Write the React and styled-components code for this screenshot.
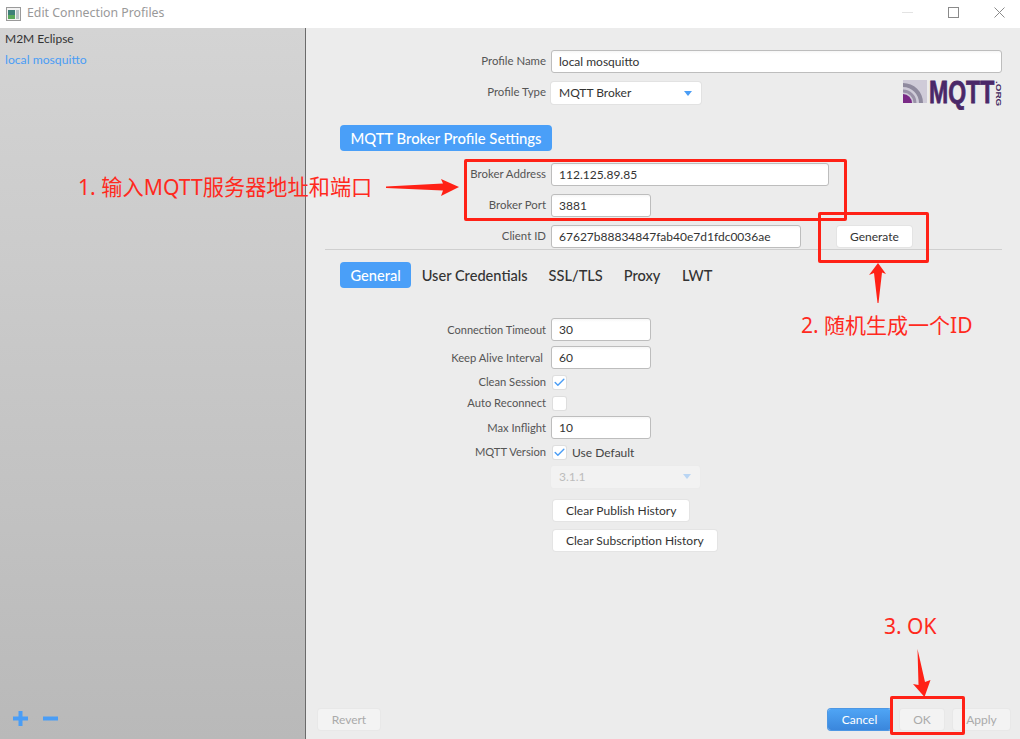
import React from "react";
import styled, { createGlobalStyle } from "styled-components";
import { Check } from "lucide-react";

const Global = createGlobalStyle`
  html, body { margin: 0; padding: 0; width: 1020px; height: 739px; overflow: hidden; background: #ececec; }
  * { box-sizing: border-box; }
  body { font-family: Lato, "Noto Sans", sans-serif; font-size: 12px; color: #333; }
`;

const Win = styled.div`
  position: relative; width: 1020px; height: 739px; display: flex; flex-direction: column; overflow: hidden;
`;
const TitleBar = styled.div`
  height: 28px; flex: none; background: #fff; display: flex; align-items: center; padding-left: 6px; gap: 6px;
  color: #999; font: 12.3px "Noto Sans", "Noto Sans CJK SC", sans-serif;
`;
const TitleText = styled.span` flex: 1; padding-bottom: 4px; `;
const WinBtns = styled.div` display: flex; width: 135px; height: 100%; flex: none; `;
const WinBtn = styled.div`
  width: 45px; display: flex; align-items: center; justify-content: center;
  padding: 0 0 4px ${p => p.$pl || 0}px;
`;
const Body = styled.div` flex: 1; display: flex; min-height: 0; `;
const Side = styled.aside`
  width: 306px; flex: none; border-right: 1px solid #6b6b6b;
  background: linear-gradient(#d4d4d4, #b9b9b9);
  display: flex; flex-direction: column; padding: 3px 5px 0;
`;
const ProfileItem = styled.div`
  height: 20px; line-height: 15px; color: ${p => p.$active ? "#4a9df5" : "#333"};
  font-size: ${p => p.$active ? 12.2 : 12}px; margin-top: ${p => p.$active ? 1 : 0}px;
`;
const SideTools = styled.div`
  margin-top: auto; height: 28px; display: flex; gap: 15px; padding-left: 8px; align-items: flex-start;
`;
const Main = styled.main`
  flex: 1; display: flex; flex-direction: column; padding: 22px 10px 9px 0; min-width: 0;
`;
const Row = styled.div`
  display: flex; align-items: center; height: ${p => p.$h || 23}px; margin-top: ${p => p.$mt || 0}px;
`;
const Label = styled.label`
  width: 245px; flex: none; text-align: right; color: #555; font-size: ${p => p.$fs || 11.4}px; padding-right: ${p => p.$pr || 5}px;
  padding-bottom: ${p => p.$fs ? 1 : 3}px; white-space: nowrap;
`;
const Input = styled.div`
  width: ${p => p.$w}px; height: 23px; background: linear-gradient(#f6f6f6 0, #fff 3px);
  border: 1px solid #bdbdbd; border-radius: 3px; padding-left: 7px; line-height: 21px; font-size: 12px; color: #333;
  white-space: nowrap; overflow: hidden;
`;
const Select = styled.div`
  width: ${p => p.$w}px; height: 22px; border-radius: 3px; background: ${p => p.$off ? "#f2f2f2" : "#fff"};
  box-shadow: 0 0 0 1px ${p => p.$off ? "#ebebeb" : "#e2e2e2"}; padding: 0 8px; line-height: 22px;
  color: ${p => p.$off ? "#bcbcbc" : "#333"}; display: flex; justify-content: space-between; align-items: center; flex: none;
`;
const Caret = styled.span`
  width: 0; height: 0; border-left: 4.5px solid transparent; border-right: 4.5px solid transparent;
  border-top: 5px solid ${p => p.$off ? "#b9d5f3" : "#4a9df5"}; margin-right: 1px;
`;
const Logo = styled.svg` margin-left: auto; margin-top: -6px; display: block; flex: none; `;
const Heading = styled.div`
  align-self: flex-start; margin: 21px 0 0 34px; height: 26px; width: 212px; background: #4a9ff8; color: #fff; border-radius: 4px;
  font-size: 14.8px; font-weight: 500; line-height: 27px; text-align: center; white-space: nowrap;
`;
const Divider = styled.div` height: 1px; background: #cfcfcf; margin: 1px 8px 0 19px; `;
const Tabs = styled.div` display: flex; align-items: center; margin: 12px 0 0 34px; height: 26px; `;
const Tab = styled.div`
  height: 26px; line-height: 27px; padding: 0 ${p => p.$p}px; font-size: 14.6px; border-radius: 4px; font-weight: 500; white-space: nowrap;
  background: ${p => p.$active ? "#4a9ff8" : "transparent"}; color: ${p => p.$active ? "#fff" : "#333"};
`;
const Btn = styled.div`
  height: 21px; line-height: 21px; padding: 0 13px; background: #fff; border-radius: 3px; color: #333; font-size: 12px;
  box-shadow: 0 0 0 1px #e4e4e4; white-space: nowrap; margin-left: ${p => p.$ml || 0}px; text-align: center; flex: none;
`;
const CheckBox = styled.div`
  width: 13px; height: 13px; background: #fff; border-radius: 2px; box-shadow: 0 0 0 1px #dedede; flex: none;
  margin-left: 2px; display: flex; align-items: center; justify-content: center; color: #4a9df5;
`;
const CheckText = styled.span` margin-left: 6px; color: #444; `;
const Spacer = styled.div` width: 245px; flex: none; `;
const Footer = styled.div`
  margin-top: auto; display: flex; align-items: center; padding-left: 12px; height: 21px;
`;
const FootBtn = styled.div`
  height: 21px; line-height: 21px; width: ${p => p.$w}px; text-align: center; border-radius: 3px; font-size: 12px; flex: none;
  margin-left: ${p => p.$ml || 0}px;
  background: ${p => p.$primary ? "linear-gradient(#4fa5f5, #3a86dc)" : "#f3f3f3"};
  color: ${p => p.$primary ? "#fff" : "#aaa"};
  box-shadow: 0 0 0 1px ${p => p.$primary ? "#4d97e4" : "#e8e8e8"};
`;
const Red = styled.div`
  position: absolute; left: ${p => p.$x}px; top: ${p => p.$y}px; width: ${p => p.$w}px; height: ${p => p.$h}px;
  border: 3px solid #ff2116; border-radius: 2px; pointer-events: none;
`;
const Note = styled.div`
  position: absolute; left: ${p => p.$x}px; top: ${p => p.$y}px; color: #ff2a1e; font-size: ${p => p.$fs || 21}px; line-height: 26px; white-space: nowrap;
  font-family: "Noto Sans", "Noto Sans CJK SC", sans-serif;
`;
const Arrows = styled.svg` position: absolute; left: 0; top: 0; pointer-events: none; `;

const Fld = ({ label, w, v, mt, fs, pr }) => (
  <Row $mt={mt}><Label $fs={fs} $pr={pr}>{label}</Label><Input $w={w}>{v}</Input></Row>
);
const Chk = ({ label, on, mt, text }) => (
  <Row $h={14} $mt={mt}>
    <Label $fs={11.2}>{label}</Label>
    <CheckBox>{on && <Check size={13} strokeWidth={2.6} />}</CheckBox>
    {text && <CheckText>{text}</CheckText>}
  </Row>
);

export default function App() {
  return (
    <Win>
      <Global />
      <TitleBar>
        <svg width="15" height="14" viewBox="0 0 15 14">
          <rect x=".5" y=".5" width="14" height="13" fill="#f2f2f2" stroke="#9a9a9a" />
          <rect x="2" y="3" width="7" height="9" fill="#3d7f78" />
          <rect x="2" y="8" width="7" height="4" fill="#5aa85c" />
          <rect x="10" y="3" width="3" height="9" fill="#b8c2c6" />
        </svg>
        <TitleText>Edit Connection Profiles</TitleText>
        <WinBtns>
          <WinBtn>
            <svg width="11" height="11" viewBox="0 0 11 11"><path d="M0 5.500h11" stroke="#e3e3e3" /></svg>
          </WinBtn>
          <WinBtn $pl={1}>
            <svg width="11" height="11" viewBox="0 0 11 11"><rect x=".5" y=".5" width="10" height="10" fill="none" stroke="#8a8a8a" /></svg>
          </WinBtn>
          <WinBtn $pl={3}>
            <svg width="11" height="11" viewBox="0 0 11 11"><path d="M.5.500l10 10M10.500.500l-10 10" fill="none" stroke="#8a8a8a" /></svg>
          </WinBtn>
        </WinBtns>
      </TitleBar>
      <Body>
        <Side>
          <ProfileItem>M2M Eclipse</ProfileItem>
          <ProfileItem $active>local mosquitto</ProfileItem>
          <SideTools>
            <svg width="15" height="15" viewBox="0 0 15 15"><path d="M5.500 0h4v5.500H15v4H9.500V15h-4V9.500H0v-4h5.500z" fill="#4a9df5" /></svg>
            <svg width="15" height="15" viewBox="0 0 15 15"><rect y="5.500" width="15" height="4" fill="#4a9df5" /></svg>
          </SideTools>
        </Side>
        <Main>
          <Fld label="Profile Name" w={451} v="local mosquitto" />
          <Row $mt={9} $h={22}>
            <Label>Profile Type</Label>
            <Select $w={150}>MQTT Broker<Caret /></Select>
            <Logo width="108" height="40" viewBox="-1 -10 108 40">
              <defs>
                <linearGradient id="mq" gradientUnits="userSpaceOnUse" x1="0" x2="0" y1="0" y2="23">
                  <stop offset="0" stopColor="#2f2348" /><stop offset="1" stopColor="#6e2f84" />
                </linearGradient>
              </defs>
              <rect width="24" height="23" fill="#cfcbd8" />
              <path d="M0 3a20 20 0 0 1 20 20h-4A16 16 0 0 0 0 7z" fill="#8f8a9e" />
              <path d="M0 9.500a13.500 13.500 0 0 1 13.500 13.500h-3A10.500 10.500 0 0 0 0 12.500z" fill="#9a92a8" />
              <path d="M0 14a9 9 0 0 1 9 9H0z" fill="#7a2a86" />
              <g transform="translate(26 23) scale(.72 1)">
                <text x="0" y="0" fontFamily="Liberation Sans" fontWeight="700" fontSize="32" fill="#4a2868" stroke="#4a2868" strokeWidth=".8">MQTT</text>
              </g>
              <g transform="translate(92.500 1) rotate(90) scale(1.1 .8)">
                <text x="0" y="0" fontFamily="Liberation Sans" fontWeight="700" fontSize="9" fill="#43285f">.ORG</text>
              </g>
            </Logo>
          </Row>
          <Heading>MQTT Broker Profile Settings</Heading>
          <Fld label="Broker Address" w={278} v="112.125.89.85" mt={12} />
          <Fld label="Broker Port" w={100} v="3881" mt={8} />
          <Row $mt={8}>
            <Label>Client ID</Label>
            <Input $w={250}>67627b88834847fab40e7d1fdc0036ae</Input>
            <Btn $ml={36}>Generate</Btn>
          </Row>
          <Divider />
          <Tabs>
            <Tab $active $p={10.5}>General</Tab>
            <Tab $p={10.5}>User Credentials</Tab>
            <Tab $p={10.5}>SSL/TLS</Tab>
            <Tab $p={10.5}>Proxy</Tab>
            <Tab $p={11}>LWT</Tab>
          </Tabs>
          <Fld fs={11} label="Connection Timeout" w={100} v="30" mt={30} />
          <Fld fs={11.2} pr={8} label="Keep Alive Interval" w={100} v="60" mt={5} />
          <Chk label="Clean Session" on mt={6} />
          <Chk label="Auto Reconnect" mt={7} />
          <Fld fs={11.2} label="Max Inflight" w={100} v="10" mt={6} />
          <Chk label="MQTT Version" on text="Use Default" mt={6} />
          <Row $h={21} $mt={7}>
            <Spacer />
            <Select $w={149} $off>3.1.1<Caret $off /></Select>
          </Row>
          <Row $h={21} $mt={13}><Spacer /><Btn $ml={2}>Clear Publish History</Btn></Row>
          <Row $h={21} $mt={9}><Spacer /><Btn $ml={2}>Clear Subscription History</Btn></Row>
          <Footer>
            <FootBtn $w={62}>Revert</FootBtn>
            <FootBtn $w={63} $primary $ml={448}>Cancel</FootBtn>
            <FootBtn $w={44} $ml={9}>OK</FootBtn>
            <FootBtn $w={57} $ml={9}>Apply</FootBtn>
          </Footer>
        </Main>
      </Body>

      <Red $x={464} $y={159} $w={383} $h={62} />
      <Red $x={818} $y={212} $w={111} $h={51} />
      <Red $x={890} $y={696} $w={75} $h={39} />
      <Note $x={78} $y={174} $fs={21.2}>1. 输入MQTT服务器地址和端口</Note>
      <Note $x={801} $y={312}>2. 随机生成一个ID</Note>
      <Note $x={884} $y={613}>3. OK</Note>
      <Arrows width="1020" height="739" viewBox="0 0 1020 739">
        <path d="M386 186.500 443 183.500 441 179 459 187 441 196 443 190.500 386 188z" fill="#ff2116" />
        <path d="M878 263 886 274 882 272.500 878.500 303 877.500 303 874 273 869 275z" fill="#ff2116" />
        <path d="M917.500 649 925 682 930.500 680 924.500 697 913 684 918.500 685z" fill="#ff2116" />
      </Arrows>
    </Win>
  );
}
